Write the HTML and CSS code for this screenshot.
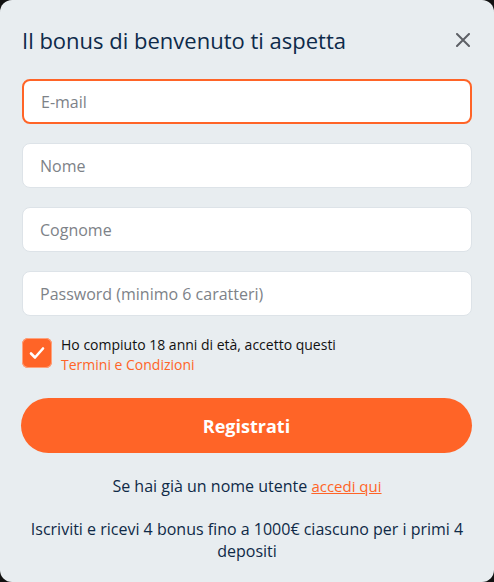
FILE: index.html
```html
<!DOCTYPE html>
<html lang="it">
<head>
  <meta charset="UTF-8" />
  <meta name="viewport" content="width=device-width, initial-scale=1.0"/>
  <title>Registrazione</title>
  <link rel="stylesheet" href="styles.css">
</head>
<body>
  <div class="modal">
    <div class="modal-header">
      <h2>Il bonus di benvenuto ti aspetta</h2>
      <button class="close" aria-label="Chiudi">
        <svg width="14" height="14" viewBox="0 0 14 14"><path d="M1 1L13 13M13 1L1 13" stroke="#5d6066" stroke-width="2" stroke-linecap="round"/></svg>
      </button>
    </div>

    <form class="form">
      <input type="email" class="field active" placeholder="E-mail" />
      <input type="text" class="field" placeholder="Nome" />
      <input type="text" class="field" placeholder="Cognome" />
      <input type="password" class="field" placeholder="Password (minimo 6 caratteri)" />

      <label class="terms">
        <span class="check">
          <svg width="16" height="14" viewBox="0 0 16 14"><path d="M2 7.5L6 11.5L14 2.5" fill="none" stroke="#fff" stroke-width="2.6" stroke-linecap="round" stroke-linejoin="round"/></svg>
        </span>
        <span class="terms-text">Ho compiuto 18 anni di età, accetto questi<br><a href="#">Termini e Condizioni</a></span>
      </label>

      <button type="button" class="submit">Registrati</button>
    </form>

    <p class="login">Se hai già un nome utente <a href="#">accedi qui</a></p>
    <p class="promo">Iscriviti e ricevi 4 bonus fino a 1000€ ciascuno per i primi 4 depositi</p>
  </div>
</body>
</html>
```

FILE: styles.css
```css
* {
  box-sizing: border-box;
}

body {
  margin: 0;
  background-color: #111;
  font-family: 'Open Sans', sans-serif;
  color: #0f2a47;
}

.modal {
  background-color: #e8edf0;
  border-radius: 12px;
  height: 582px;
  padding: 0 22px;
}

.modal-header {
  display: flex;
  justify-content: space-between;
  align-items: center;
  padding-top: 24px;
  height: 56px;
}

h2 {
  margin: 0;
  font-size: 22px;
  font-weight: 400;
  color: #0d2a4a;
}

.close {
  border: none;
  background: none;
  padding: 0;
  margin-right: 2px;
  cursor: pointer;
  display: flex;
}

.form {
  display: flex;
  flex-direction: column;
  margin-top: 23px;
}

.field {
  height: 45px;
  border: 1px solid #dde3e8;
  border-radius: 8px;
  background-color: #fff;
  padding: 0 17px;
  font-family: inherit;
  font-size: 16px;
  color: #0f2a47;
  margin-bottom: 19px;
  outline: none;
}

.field::placeholder {
  color: #7d8288;
}

.field.active {
  border: 2px solid #ff6427;
}

.terms {
  display: flex;
  align-items: flex-start;
  gap: 9px;
  margin-top: 3px;
}

.check {
  width: 30px;
  height: 30px;
  border-radius: 6px;
  background-color: #ff6427;
  box-shadow: 0 0 0 1px #ffa27c inset;
  display: flex;
  align-items: center;
  justify-content: center;
  flex-shrink: 0;
}

.terms-text {
  font-size: 14px;
  line-height: 20px;
  color: #111;
  margin-top: -3px;
}

.terms-text a {
  color: #ff6427;
  text-decoration: none;
}

.submit {
  margin-top: 23px;
  height: 55px;
  width: 451px;
  margin-left: -1px;
  border: none;
  border-radius: 28px;
  background-color: #ff6427;
  color: #fff;
  font-family: inherit;
  font-size: 18px;
  font-weight: 700;
  cursor: pointer;
}

.login {
  text-align: center;
  font-size: 16px;
  margin: 22px 0 0;
  line-height: 22px;
}

.login a {
  color: #ff6427;
  font-size: 15px;
}

.promo {
  text-align: center;
  font-size: 16px;
  line-height: 22px;
  margin: 21px 0 0;
}
```
